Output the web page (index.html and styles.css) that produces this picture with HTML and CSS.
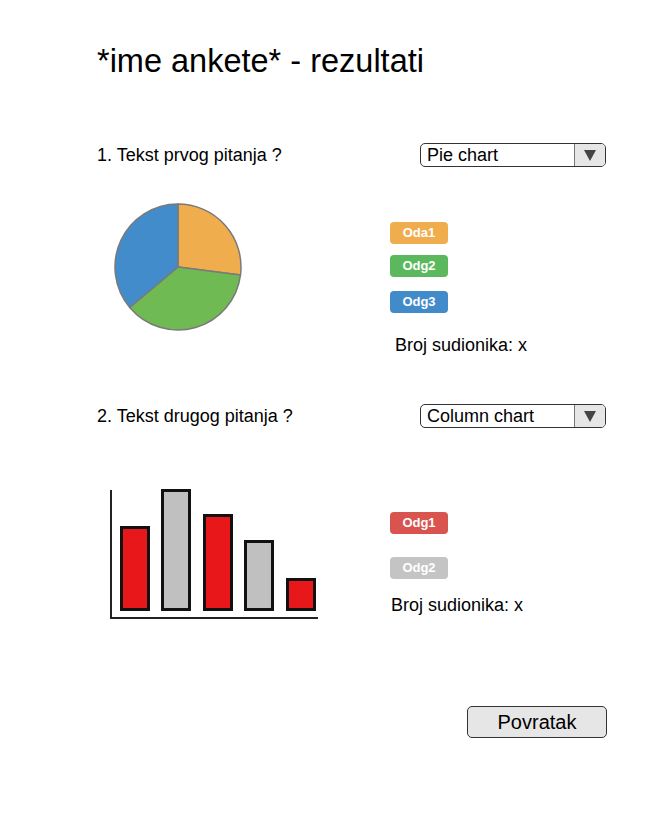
FILE: index.html
```html
<!DOCTYPE html>
<html>
<head>
<meta charset="utf-8">
<title>Rezultati ankete</title>
<link rel="stylesheet" href="styles.css">
</head>
<body>
<main class="page">
  <h1 class="title">*ime ankete* - rezultati</h1>

  <section class="question q1">
    <div class="q-head">
      <p class="q-text">1. Tekst prvog pitanja ?</p>
      <div class="select">
        <span class="select-label">Pie chart</span>
        <span class="select-btn"><span class="tri"></span></span>
      </div>
    </div>
    <div class="q-body">
      <div class="chart">
        <svg class="pie" width="130" height="130" viewBox="0 0 130 130">
          <path d="M65,65 L65,2 A63,63 0 0 1 127.47,73.11 Z" fill="#f0ad4e" stroke="#7a7a7a" stroke-width="1.5" stroke-linejoin="round"/>
          <path d="M65,65 L127.47,73.11 A63,63 0 0 1 16.74,105.5 Z" fill="#6fba52" stroke="#7a7a7a" stroke-width="1.5" stroke-linejoin="round"/>
          <path d="M65,65 L16.74,105.5 A63,63 0 0 1 65,2 Z" fill="#438ccb" stroke="#7a7a7a" stroke-width="1.5" stroke-linejoin="round"/>
        </svg>
      </div>
      <div class="legend">
        <span class="badge orange">Oda1</span>
        <span class="badge green">Odg2</span>
        <span class="badge blue">Odg3</span>
        <p class="count">Broj sudionika: x</p>
      </div>
    </div>
  </section>

  <section class="question q2">
    <div class="q-head">
      <p class="q-text">2. Tekst drugog pitanja ?</p>
      <div class="select">
        <span class="select-label">Column chart</span>
        <span class="select-btn"><span class="tri"></span></span>
      </div>
    </div>
    <div class="q-body">
      <div class="chart">
        <svg class="bars" width="214" height="134" viewBox="0 0 214 134">
          <rect x="15.5" y="41.5" width="27" height="82" fill="#e8171a" stroke="#111" stroke-width="3"/>
          <rect x="56.5" y="4.5" width="27" height="119" fill="#c0c0c0" stroke="#111" stroke-width="3"/>
          <rect x="98.5" y="29.5" width="27" height="94" fill="#e8171a" stroke="#111" stroke-width="3"/>
          <rect x="139.5" y="55.5" width="27" height="68" fill="#c0c0c0" stroke="#111" stroke-width="3"/>
          <rect x="181.5" y="93.5" width="27" height="30" fill="#e8171a" stroke="#111" stroke-width="3"/>
          <path d="M5,4 L5,132 L212,132" fill="none" stroke="#222" stroke-width="2"/>
        </svg>
      </div>
      <div class="legend">
        <span class="badge red">Odg1</span>
        <span class="badge gray">Odg2</span>
        <p class="count">Broj sudionika: x</p>
      </div>
    </div>
  </section>

  <div class="footer">
    <button class="btn" type="button">Povratak</button>
  </div>
</main>
</body>
</html>
```

FILE: styles.css
```css
html, body {
  margin: 0;
  padding: 0;
  background: #fff;
}

body {
  font-family: "Liberation Sans", Arial, sans-serif;
  color: #000;
}

.page {
  width: 672px;
  box-sizing: border-box;
  padding: 43px 66px 0 97px;
}

.title {
  margin: 0;
  font-size: 32.5px;
  line-height: 37px;
  font-weight: normal;
}

.q-head {
  display: flex;
  justify-content: space-between;
  align-items: center;
  height: 24px;
}

.q1 .q-head {
  margin-top: 63px;
}

.q2 .q-head {
  margin-top: 49px;
}

.q-text {
  margin: 0;
  font-size: 18px;
  line-height: 21px;
}

.select {
  display: flex;
  width: 186px;
  height: 24px;
  box-sizing: border-box;
  border: 1px solid #333;
  border-radius: 5px;
  overflow: hidden;
  background: #fff;
}

.select-label {
  flex: 1;
  padding-left: 6px;
  font-size: 18px;
  line-height: 23px;
}

.select-btn {
  width: 30px;
  display: flex;
  align-items: center;
  justify-content: center;
  background: #e6e6e6;
  border-left: 1px solid #777;
}

.tri {
  width: 0;
  height: 0;
  border-left: 6px solid transparent;
  border-right: 6px solid transparent;
  border-top: 11px solid #444;
}

.q-body {
  display: flex;
  align-items: flex-start;
}

.chart {
  width: 293px;
  flex: none;
}

.pie {
  display: block;
  margin: 35px 0 0 16px;
}

.bars {
  display: block;
  margin: 58px 0 0 9px;
}

.legend {
  display: flex;
  flex-direction: column;
  align-items: flex-start;
}

.q1 .legend {
  padding-top: 55px;
}

.q2 .legend {
  padding-top: 84px;
}

.badge {
  display: block;
  width: 58px;
  height: 22px;
  border-radius: 4px;
  color: #fff;
  font-weight: bold;
  font-size: 13px;
  line-height: 22px;
  text-align: center;
}

.q1 .badge + .badge {
  margin-top: 11px;
}

.q1 .badge.blue {
  margin-top: 14px;
}

.q2 .badge + .badge {
  margin-top: 23px;
}

.orange { background: #f0ad4e; }
.green { background: #5cb85c; }
.blue { background: #428bca; }
.red { background: #d9534f; }
.gray { background: #c4c4c4; }

.count {
  margin: 0;
  font-size: 18px;
  line-height: 20px;
}

.q1 .count {
  margin: 22px 0 0 5px;
}

.q2 .count {
  margin: 16px 0 0 1px;
}

.footer {
  display: flex;
  justify-content: flex-end;
  margin-top: 86px;
  margin-right: -1px;
}

.btn {
  width: 140px;
  height: 32px;
  box-sizing: border-box;
  border: 1px solid #333;
  border-radius: 5px;
  background: #e6e6e6;
  font-family: "Liberation Sans", Arial, sans-serif;
  font-size: 20px;
  line-height: 28px;
  color: #000;
  padding: 0;
}
```
